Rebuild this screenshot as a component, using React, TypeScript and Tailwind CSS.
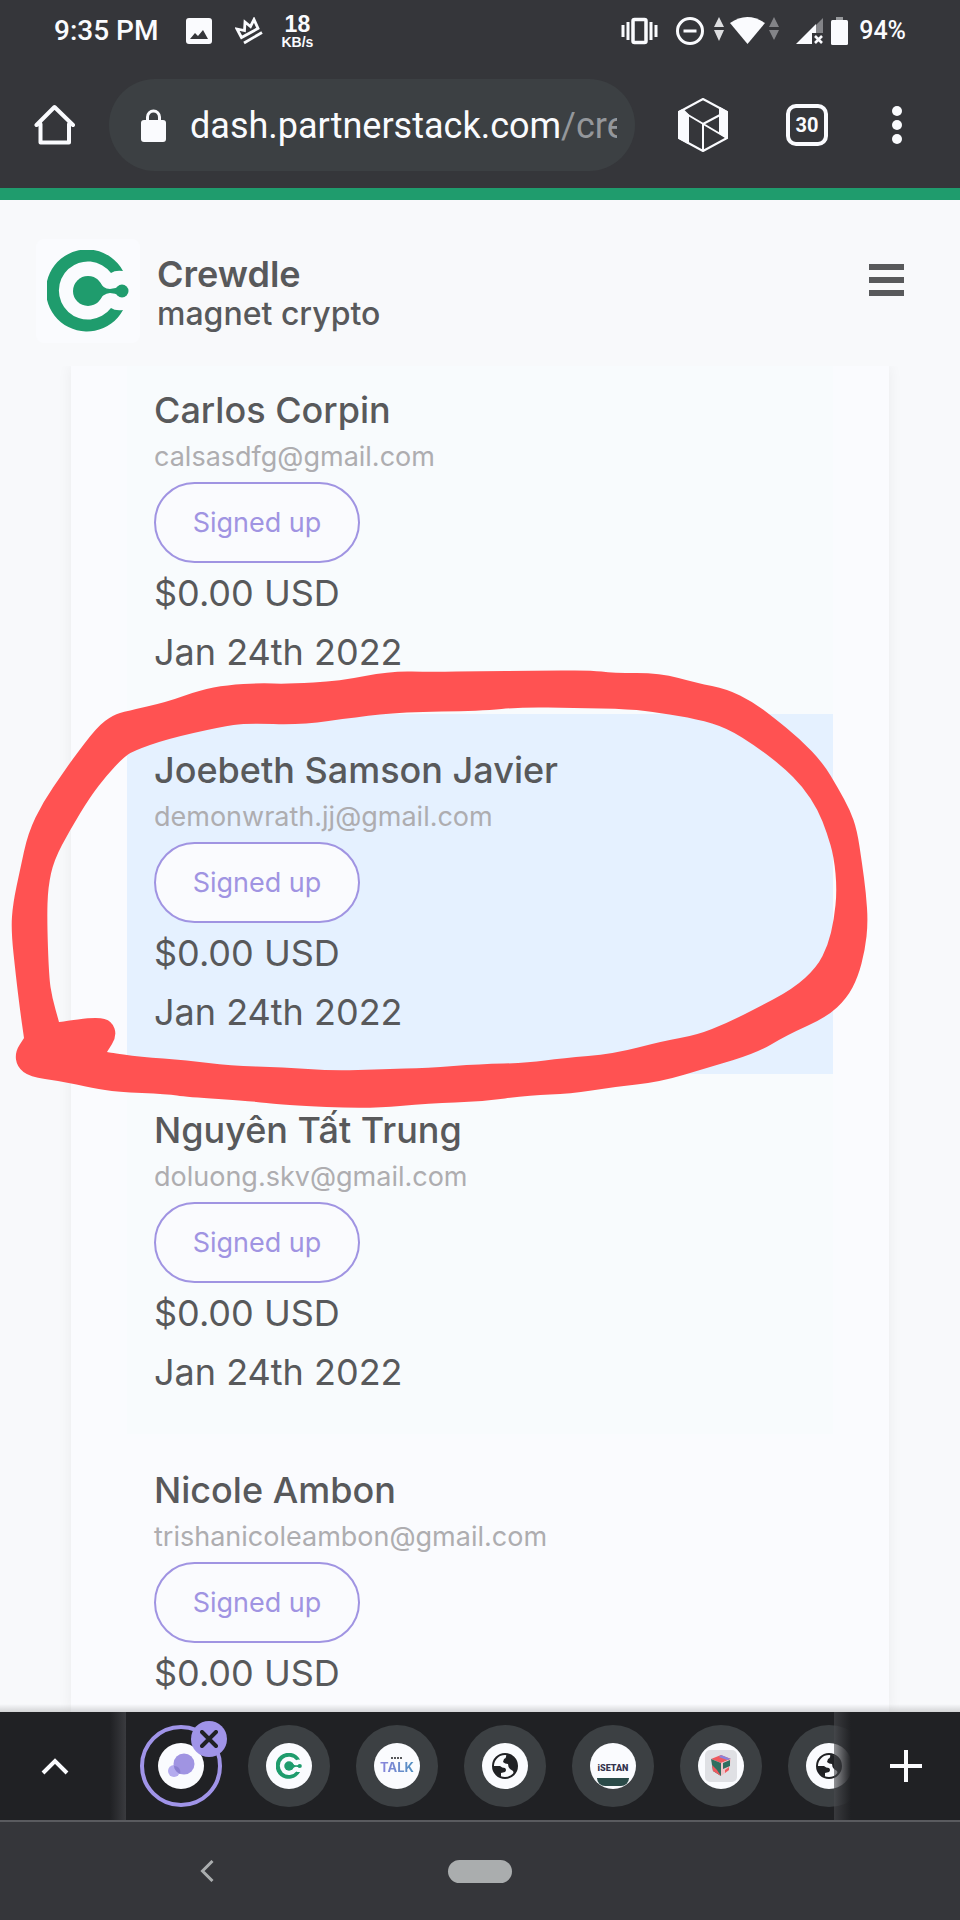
import { ReactNode } from 'react';

interface Referral { name: string; email: string; status: string; amount: string; date: string; }

const REFERRALS: Referral[] = [
  { name: 'Carlos Corpin', email: 'calsasdfg@gmail.com', status: 'Signed up', amount: '$0.00 USD', date: 'Jan 24th 2022' },
  { name: 'Joebeth Samson Javier', email: 'demonwrath.jj@gmail.com', status: 'Signed up', amount: '$0.00 USD', date: 'Jan 24th 2022' },
  { name: 'Nguyên Tất Trung', email: 'doluong.skv@gmail.com', status: 'Signed up', amount: '$0.00 USD', date: 'Jan 24th 2022' },
  { name: 'Nicole Ambon', email: 'trishanicoleambon@gmail.com', status: 'Signed up', amount: '$0.00 USD', date: 'Jan 24th 2022' },
];

const MARKED = 1;
const ROW_BG = ['bg-[#f8fbfd]', 'bg-[#e5f1ff]', 'bg-[#f8fbfd]', 'bg-[#fafbfe]'];

type Pt = [number, number];

// Outline of the marker stroke, outer edge then inner edge
const OUTER: Pt[] = [
  [20, 870], [28, 833], [43, 802], [63, 773], [72, 760], [97, 727], [113, 715], [127, 711], [167, 702], [200, 690],
  [227, 685], [260, 683], [287, 684], [340, 681], [390, 671], [433, 672], [480, 671], [533, 671], [590, 670], [613, 673],
  [660, 673], [697, 683], [727, 689], [753, 702], [773, 717], [800, 739], [823, 763], [838, 788], [850, 810], [857, 830],
  [862, 863], [866, 893], [868, 923], [865, 950], [858, 977], [847, 998], [827, 1017], [787, 1035], [757, 1053], [710, 1067],
  [660, 1082], [613, 1087], [570, 1094], [530, 1095], [480, 1102], [430, 1103], [370, 1109], [283, 1105], [250, 1101],
  [187, 1097], [167, 1094], [117, 1092], [93, 1088], [60, 1081], [30, 1077], [17, 1067], [15, 1052], [24, 1038], [24, 1038],
  [20, 1010], [16, 977], [11, 930], [13, 903],
];
const INNER: Pt[] = [
  [54, 860], [48, 887], [47, 920], [49, 977], [52, 997], [59, 1022], [59, 1022], [97, 1017], [112, 1021], [117, 1036], [107, 1052],
  [107, 1052], [140, 1057], [187, 1060], [230, 1066], [283, 1067], [333, 1071], [383, 1069], [427, 1068], [480, 1064],
  [527, 1063], [563, 1058], [613, 1054], [663, 1041], [697, 1035], [727, 1023], [753, 1010], [793, 989], [817, 967],
  [828, 945], [834, 920], [837, 890], [834, 857], [827, 833], [818, 810], [803, 787], [783, 767], [757, 747], [727, 728],
  [697, 719], [660, 713], [630, 709], [573, 708], [523, 707], [480, 711], [403, 712], [357, 717], [300, 725], [247, 723],
  [220, 727], [167, 739], [133, 751], [123, 758], [107, 775], [90, 797], [70, 830],
];

const smooth = (pts: Pt[]) => {
  const mid = (a: Pt, b: Pt) => `${(a[0] + b[0]) / 2} ${(a[1] + b[1]) / 2}`;
  const n = pts.length;
  return `M${mid(pts[n - 1], pts[0])}` + pts.map((p, i) => `Q${p[0]} ${p[1]} ${mid(p, pts[(i + 1) % n])}`).join('') + 'Z';
};

function CrewdleLogo({ className }: { className: string }) {
  return (
    <svg viewBox="0 0 82 82" className={className} fill="#1f9c6d" aria-hidden="true">
      <path d="M76 21A41 41 0 1 0 76 60Q68 61 64 58A29 29 0 1 1 64 23Q68 20 76 21Z" />
      <circle cx="41" cy="41" r="15" />
      <circle cx="75" cy="41" r="6.500" />
      <path d="M50 29Q56 39 63 39Q68 39 73 36V46Q68 43 63 43Q56 43 50 53Z" />
    </svg>
  );
}

function Globe() {
  return (
    <svg viewBox="0 0 26 26" className="size-[26px] shrink-0" aria-hidden="true">
      <circle cx="13" cy="13" r="12" fill="#fafbfe" stroke="#202124" strokeWidth="2" />
      <path d="M1 13L8 13Q10 15 13 15Q15 17 13 19L9 20V24Q2 21 1 13Z" fill="#202124" />
      <path d="M14 1Q15 5 12 6L11 9Q13 11 16 11Q16 14 18 16L21 18L22 21Q26 16 25 11Q22 3 14 1Z" fill="#202124" />
    </svg>
  );
}

function StatusBar() {
  return (
    <div className="flex h-[62px] shrink-0 items-center pl-[54px] pr-[54px] font-[Roboto,sans-serif] font-medium text-[#fafbfe]">
      <span className="text-[28px] leading-8">9:35 PM</span>
      <svg viewBox="0 0 26 26" className="ml-7 size-[26px]" aria-hidden="true">
        <rect width="26" height="26" rx="3" fill="currentColor" />
        <path d="M4 21L9 15L12 18L17 12L22 21Z" fill="#35363a" />
      </svg>
      <svg viewBox="0 0 28 28" className="ml-[23px] size-7" fill="none" stroke="currentColor" strokeWidth="2.800" aria-hidden="true">
        <path d="M6.500 20.500L2 12L9.500 13.500L10 5L15.500 9.500L19 2.500L23 11.500Z" />
        <path d="M9 26L27 15.500" />
      </svg>
      <div className="ml-[18px] flex flex-col items-center font-['Liberation_Sans',sans-serif] font-bold">
        <span className="text-[23px] leading-[21px]">18</span>
        <span className="text-[14px] leading-[14px]">KB/s</span>
      </div>
      <svg viewBox="0 0 37 28" className="ml-auto h-7 w-[37px]" aria-hidden="true">
        <rect x="12" y="2.500" width="13" height="23" rx="1.500" fill="none" stroke="currentColor" strokeWidth="3.500" />
        <path d="M2 8V20M7 5V23M30 5V23M35 8V20" stroke="currentColor" strokeWidth="3" />
      </svg>
      <svg viewBox="0 0 28 28" className="ml-[18px] size-7" fill="none" stroke="currentColor" aria-hidden="true">
        <circle cx="14" cy="14" r="12.500" strokeWidth="3" />
        <path d="M7.500 14H20.500" strokeWidth="3" />
      </svg>
      <svg viewBox="0 0 66 28" className="ml-[10px] h-7 w-[66px]" fill="currentColor" aria-hidden="true">
        <path d="M0 10L5 0L10 10ZM0 13H10L5 24Z" opacity=".85" />
        <path d="M16 6Q33 -6 51 6L33.500 27Z" />
        <path d="M55 10L60 0L65 10ZM55 13H65L60 23Z" opacity=".4" />
      </svg>
      <svg viewBox="0 0 28 28" className="ml-4 size-7" aria-hidden="true">
        <path d="M20 8L27 1V16H20Z" fill="currentColor" opacity=".4" />
        <path d="M0 27L20 7V16H16V27Z" fill="currentColor" />
        <path d="M19 19L26 26M26 19L19 26" stroke="currentColor" strokeWidth="2.600" />
      </svg>
      <svg viewBox="0 0 17 28" className="ml-[7px] h-7 w-[17px]" fill="currentColor" aria-hidden="true">
        <rect x="5" y="0" width="7" height="4" opacity=".5" />
        <rect y="3" width="17" height="25" rx="1.500" />
      </svg>
      <span className="ml-[11px] text-[25px] leading-8">94%</span>
    </div>
  );
}

function AddressBar() {
  return (
    <div className="flex h-[126px] shrink-0 items-center pl-[34px] pr-[58px] text-[#fafbfe]">
      <button type="button" aria-label="Home" className="shrink-0">
        <svg viewBox="0 0 42 42" className="size-[42px]" fill="none" stroke="currentColor" strokeWidth="4" strokeLinejoin="round" strokeLinecap="round">
          <path d="M2.500 21L20.500 3L39 21M6.500 20V38.500H35V20" />
        </svg>
      </button>
      <div className="ml-[33px] flex h-[92px] min-w-0 flex-1 items-center rounded-full bg-[#3c4043] pl-8 pr-[18px]">
        <svg viewBox="0 0 25 33" className="h-[33px] w-[25px] shrink-0" aria-hidden="true">
          <rect y="11" width="25" height="22" rx="3" fill="currentColor" />
          <path d="M6.500 13V8A6 6 0 0 1 18.500 8V13" fill="none" stroke="currentColor" strokeWidth="3" />
        </svg>
        <p className="ml-6 min-w-0 flex-1 overflow-hidden whitespace-nowrap pt-0.5 font-[Roboto,sans-serif] text-[36px] leading-[48px]">
          dash.partnerstack.com<span className="text-[#94979b]">/crewdle</span>
        </p>
      </div>
      <button type="button" aria-label="Extension" className="ml-[43px] shrink-0">
        <svg viewBox="0 0 50 54" className="h-[54px] w-[50px]" fill="none" stroke="currentColor" strokeWidth="2" strokeLinejoin="round">
          <path d="M25 1L49 14V40L25 53L1 40V14Z" />
          <path d="M5 14L49 40M25 26V53M25 26L42 17" />
          <path d="M1 14L5 12L10 17V45L1 40ZM49 14L42 10V35L49 40Z" fill="currentColor" />
        </svg>
      </button>
      <button type="button" aria-label="Open tabs" className="ml-[58px] flex size-[42px] shrink-0 items-center justify-center rounded-[10px] border-4 border-current font-[Roboto,sans-serif] text-[20px] font-bold leading-6">
        30
      </button>
      <button type="button" aria-label="More options" className="ml-[64px] shrink-0">
        <svg viewBox="0 0 10 38" className="h-[38px] w-[10px]" fill="currentColor">
          <circle cx="5" cy="5" r="5" />
          <circle cx="5" cy="19" r="5" />
          <circle cx="5" cy="33" r="5" />
        </svg>
      </button>
    </div>
  );
}

function PageHeader() {
  return (
    <header className="flex h-[166px] shrink-0 items-start bg-[#f8f9fb] pl-9 pr-14 pt-[39px] text-[#58595b]">
      <div className="flex size-[104px] items-center justify-center rounded-lg bg-[#fafbfe]">
        <CrewdleLogo className="size-[82px]" />
      </div>
      <div className="ml-[17px] pt-[14px]">
        <h1 className="text-[36px] font-semibold leading-[42px]">Crewdle</h1>
        <p className="text-[32px] font-medium leading-[38px]">magnet crypto</p>
      </div>
      <button type="button" aria-label="Menu" className="ml-auto mt-[25px] flex flex-col gap-[7px]">
        <span className="h-[6px] w-[35px] bg-[#58595b]" />
        <span className="h-[6px] w-[35px] bg-[#58595b]" />
        <span className="h-[6px] w-[35px] bg-[#58595b]" />
      </button>
    </header>
  );
}

function ReferralRow({ r, bg, marked }: { r: Referral; bg: string; marked: boolean }) {
  return (
    <li className={`relative px-[27px] pb-8 pt-[30px] text-[36px] text-[#58595b] ${bg}`}>
      <h2 className="font-medium leading-[52px]">{r.name}</h2>
      <p className="text-[27px] leading-[42px] text-[#aeadb0]">{r.email}</p>
      <button type="button" className="mb-px mt-1 flex h-[81px] w-[206px] items-center justify-center rounded-full border-2 border-[#a094e2] bg-[#fafbfe] text-[27px] leading-8 text-[#a094e2]">
        {r.status}
      </button>
      <p className="leading-[59px]">{r.amount}</p>
      <p className="leading-[59px]">{r.date}</p>
      {marked && (
        <svg viewBox="0 660 960 460" className="pointer-events-none absolute -left-[127px] -top-[54px] z-10 h-[460px] w-[960px] max-w-none" aria-hidden="true">
          <path d={smooth(OUTER) + smooth(INNER)} fill="#ff5252" fillRule="evenodd" />
        </svg>
      )}
    </li>
  );
}

function Tab({ label, children }: { label: string; children: ReactNode }) {
  return (
    <button type="button" aria-label={label} className="flex size-[82px] shrink-0 items-center justify-center rounded-full bg-[#3c4043]">
      <span className="flex size-[46px] flex-col items-center justify-center overflow-hidden rounded-full bg-[#fafbfe]">{children}</span>
    </button>
  );
}

function TabStrip() {
  return (
    <div className="flex h-[108px] shrink-0 items-stretch bg-[#202124] text-[#fafbfe]">
      <button type="button" aria-label="Expand" className="flex w-[110px] shrink-0 items-center justify-center">
        <svg viewBox="0 0 28 18" className="h-[18px] w-7" fill="none" stroke="currentColor" strokeWidth="4">
          <path d="M2 16L14 4L26 16" />
        </svg>
      </button>
      <div className="w-4 shrink-0 bg-linear-to-r from-[#202124] to-[#3a3b3f]" />
      <div className="relative min-w-0 flex-1">
        <div className="flex h-full items-center gap-[26px] overflow-hidden pl-[14px]">
          <div className="relative flex size-[82px] shrink-0 items-center justify-center rounded-full border-4 border-[#a094e8]">
            <span className="flex size-[46px] items-center justify-center rounded-full bg-[#fafbfe]">
              <svg viewBox="0 0 28 26" className="h-[26px] w-7" aria-hidden="true">
                <circle cx="7" cy="18" r="6" fill="#b4abee" />
                <circle cx="17" cy="11" r="10.500" fill="#a094e2" />
                <path d="M7 13A10.500 10.500 0 0 0 13 21A6 6 0 0 0 7 13Z" fill="#8a7fd0" />
              </svg>
            </span>
            <button type="button" aria-label="Close tab" className="absolute -right-[9px] -top-2 flex size-9 items-center justify-center rounded-full bg-[#a094e8]">
              <svg viewBox="0 0 18 18" className="size-[18px]" stroke="#202124" strokeWidth="4" strokeLinecap="round">
                <path d="M2 2L16 16M16 2L2 16" />
              </svg>
            </button>
          </div>
          <Tab label="Crewdle"><CrewdleLogo className="size-[26px]" /></Tab>
          <Tab label="Talk">
            <svg viewBox="0 0 12 2" className="h-0.5 w-3" aria-hidden="true">
              <path d="M0 1H12" stroke="#58595b" strokeWidth="2" strokeDasharray="2 1" />
            </svg>
            <span className="bg-linear-to-r from-[#8a84dc] to-[#4d8fc0] bg-clip-text text-[13px] font-bold leading-[16px] text-transparent">TALK</span>
          </Tab>
          <Tab label="Website"><Globe /></Tab>
          <Tab label="iSetan">
            <span className="mt-4 font-[Roboto,sans-serif] text-[9px] font-black leading-[12px] text-[#33334d]">iSETAN</span>
            <span className="mt-1 h-2 w-8 shrink-0 rounded-b-lg bg-[#2a4a48]" />
          </Tab>
          <Tab label="Cube">
            <svg viewBox="0 0 32 32" className="size-8" aria-hidden="true">
              <rect width="32" height="32" rx="5" fill="#dfe0e4" />
              <path d="M6 9L16 5L26 9L16 13Z" fill="#ef5a5f" />
              <path d="M16 5L26 9L22 10L14 7Z" fill="#8a84dc" />
              <path d="M6 9L16 13V26L8 21Z" fill="#2f6f60" />
              <path d="M7 15L12 20L16 26L8 21Z" fill="#ef5a5f" />
              <path d="M26 9L16 13V26L24 20Z" fill="#f0c4c8" />
              <path d="M18 13L25 10V16L18 19Z" fill="#2f6f60" />
              <path d="M20 20L24 17V20L20 23Z" fill="#ef5a5f" />
            </svg>
          </Tab>
          <Tab label="Website"><Globe /></Tab>
        </div>
        <div className="absolute inset-y-0 right-0 w-[17px] bg-linear-to-r from-[#4a4b4f]/60 to-[#202124]" />
      </div>
      <button type="button" aria-label="New tab" className="flex w-[109px] shrink-0 items-center justify-center">
        <svg viewBox="0 0 32 32" className="size-8" stroke="currentColor" strokeWidth="4">
          <path d="M16 0V32M0 16H32" />
        </svg>
      </button>
    </div>
  );
}

function SystemNav() {
  return (
    <nav className="grid h-[100px] shrink-0 grid-cols-[1fr_64px_1fr] items-center border-t-2 border-[#5a5b5f]">
      <button type="button" aria-label="Back" className="mr-[34px] justify-self-center">
        <svg viewBox="0 0 14 22" className="h-[22px] w-[14px]" fill="none" stroke="#aaadae" strokeWidth="3">
          <path d="M12.500 1L2.500 11L12.500 21" />
        </svg>
      </button>
      <button type="button" aria-label="Home screen" className="h-[23px] rounded-full bg-[#aaadae]" />
    </nav>
  );
}

export default function App() {
  return (
    <div className="flex h-screen flex-col overflow-hidden bg-[#35363a] font-[Inter,sans-serif]">
      <StatusBar />
      <AddressBar />
      <div className="h-3 shrink-0 bg-[#1f9c6d]" />
      <PageHeader />
      <main className="relative min-h-0 flex-1 overflow-hidden bg-[#f8f9fb]">
        <div className="mx-[71px] flow-root h-full bg-[#fafbfe] px-14 shadow-[0_0_14px_rgba(0,0,0,0.06)]">
          <ul className="-mt-3">
            {REFERRALS.map((r, i) => (
              <ReferralRow key={r.email} r={r} bg={ROW_BG[i]} marked={i === MARKED} />
            ))}
          </ul>
        </div>
        <div className="absolute inset-x-0 bottom-0 h-2 bg-linear-to-b from-transparent to-black/15" />
      </main>
      <TabStrip />
      <SystemNav />
    </div>
  );
}
